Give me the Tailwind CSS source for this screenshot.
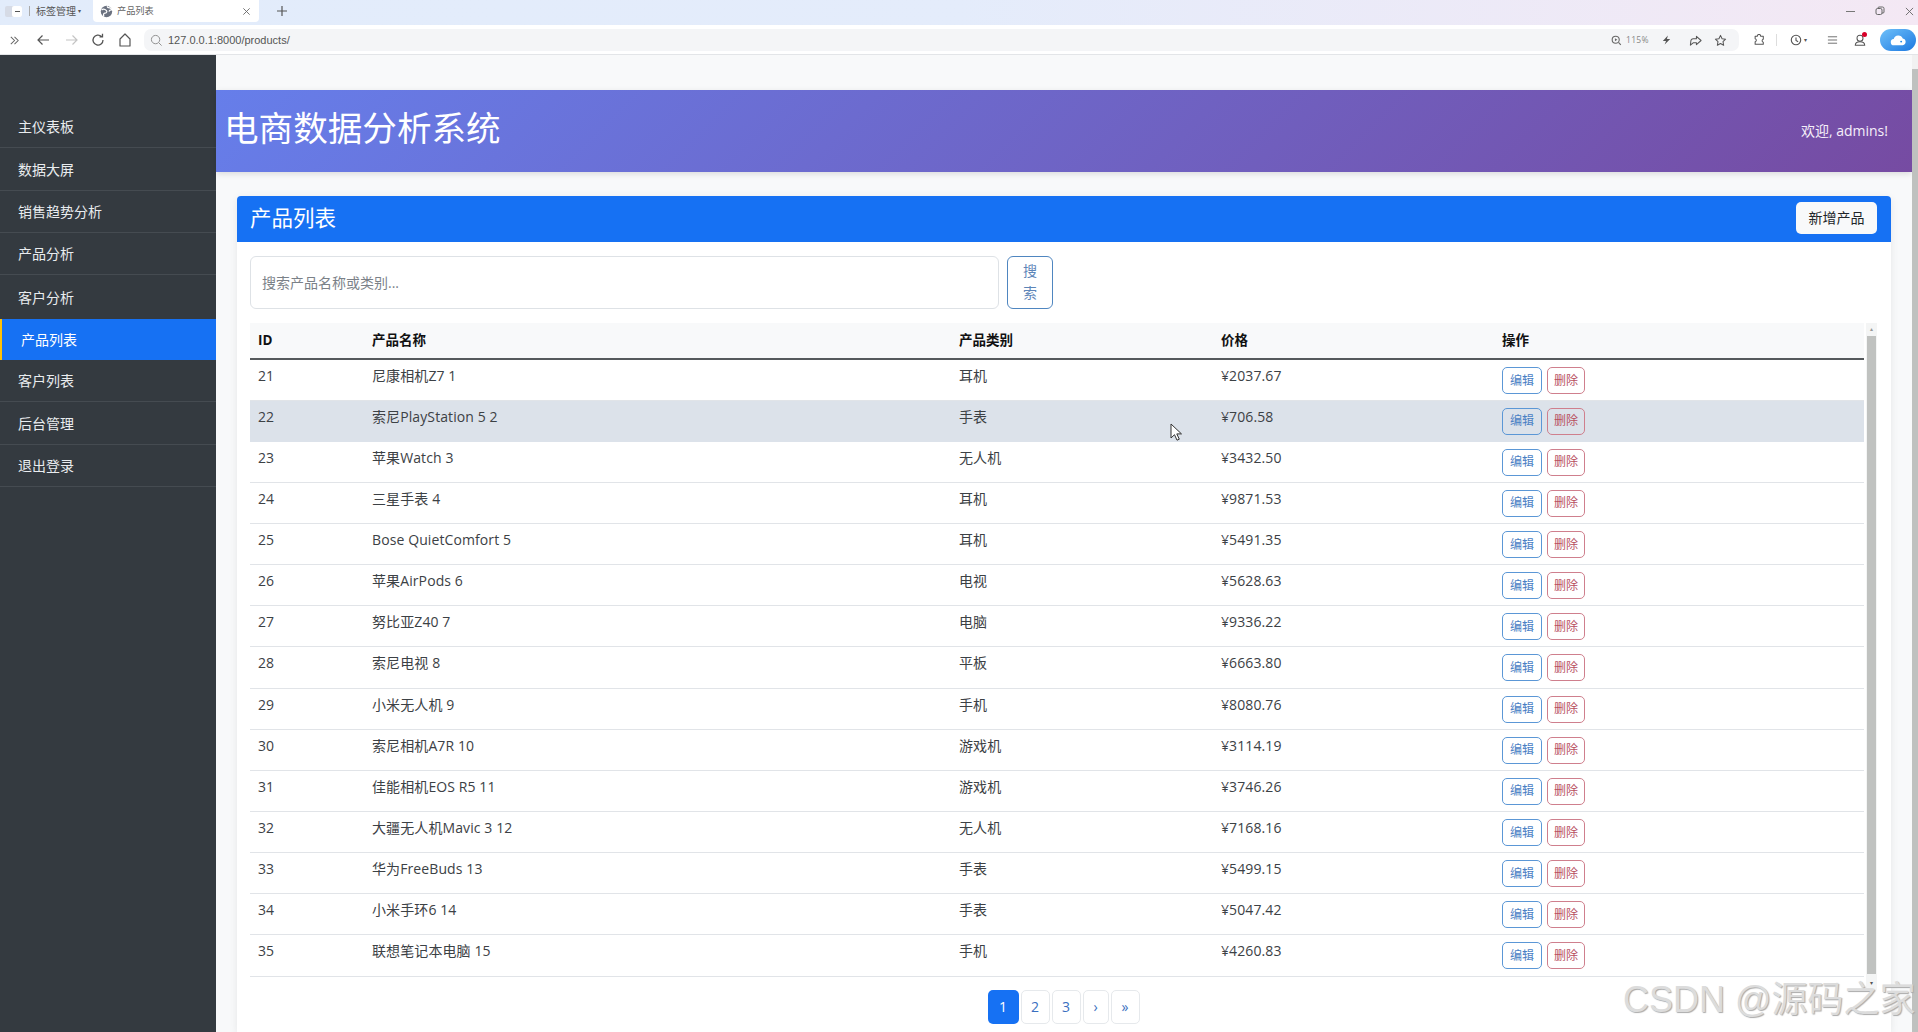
<!DOCTYPE html>
<html lang="zh-CN">
<head>
<meta charset="utf-8">
<title>产品列表</title>
<script src="https://cdn.jsdelivr.net/npm/@tailwindcss/browser@4"></script>
</head>
<body class="h-[1032px] w-[1918px] overflow-hidden bg-[#f8f9fa] font-['Open_Sans','Noto_Sans_CJK_SC',sans-serif] text-[#212529] relative">

<!-- browser chrome -->
<div class="h-[25px] flex items-start bg-gradient-to-r from-[#e2ecfb] via-[#e4ecfb] to-[#f4e8f4] text-[11px] text-[#555]">
  <div class="flex items-center w-[93px] h-[22px] pl-[5px]">
    <div class="w-[17px] h-[11px] rounded-[2px] bg-[#d6dbe6] flex justify-end shrink-0"><div class="w-[10px] h-full bg-white rounded-[2px] flex items-center justify-center"><div class="w-[5px] h-px bg-[#555]"></div></div></div>
    <div class="ml-[7px] w-px h-[10px] bg-[#aaa] shrink-0"></div>
    <span class="ml-[6px] text-[10px] whitespace-nowrap">标签管理</span><span class="text-[6px] ml-[2px]">▾</span>
  </div>
  <div class="w-[166px] h-[22px] bg-white rounded-b-[4px] flex items-center pl-[7px] pr-[8px] gap-[4px]">
    <svg width="13" height="13" viewBox="0 0 16 16"><circle cx="8" cy="8" r="7" fill="#6b7280"/><path d="M2 6c3-2 5 0 6 1s0 3-2 3-2 3-1 4M9 1.500c0 2 2 2 3 2s2 1 2.500 2.500c-2 0-3 .5-3.500 2" fill="none" stroke="#fff" stroke-width="1.500"/></svg>
    <span class="text-[9.200px] flex-1 text-[#666]">产品列表</span>
    <svg width="9" height="9" viewBox="0 0 10 10"><path d="M1.500 1.500l7 7M8.500 1.500l-7 7" stroke="#666" stroke-width="1"/></svg>
  </div>
  <svg class="ml-[17px] mt-[5px]" width="12" height="12" viewBox="0 0 12 12"><path d="M6 1v10M1 6h10" stroke="#555" stroke-width="1.200"/></svg>
  <div class="ml-auto flex items-center h-[22px] gap-[20px] pr-[4px]">
    <div class="w-[9px] h-px bg-[#777]"></div>
    <svg width="10" height="10" viewBox="0 0 10 10"><rect x="1" y="2.500" width="6" height="6" rx="1.500" fill="none" stroke="#666"/><path d="M3 2.500V2a1 1 0 0 1 1-1h3.500A1.500 1.500 0 0 1 9 2.500V6a1 1 0 0 1-1 1h-1" fill="none" stroke="#666"/></svg>
    <svg width="9" height="9" viewBox="0 0 10 10"><path d="M1 1l8 8M9 1l-8 8" stroke="#666" stroke-width="1"/></svg>
  </div>
</div>
<div class="h-[30px] pt-[1px] flex items-center bg-white border-b border-[#e3e5e8]">
  <div class="w-[144px] shrink-0 flex items-center pl-[9px] text-[#666]">
    <svg width="11" height="11" viewBox="0 0 12 12"><path d="M2 2l4 4-4 4M6 2l4 4-4 4" fill="none" stroke="#666" stroke-width="1.100"/></svg>
    <svg class="ml-[15px]" width="16" height="16" viewBox="0 0 16 16"><path d="M14 8H3M7.500 3.500L3 8l4.500 4.500" fill="none" stroke="#555" stroke-width="1.200"/></svg>
    <svg class="ml-[13px]" width="16" height="16" viewBox="0 0 16 16"><path d="M2 8h11M8.500 3.500L13 8l-4.500 4.500" fill="none" stroke="#c4c4c4" stroke-width="1.200"/></svg>
    <svg class="ml-[10px]" width="16" height="16" viewBox="0 0 16 16"><path d="M13 8a5 5 0 1 1-1.500-3.500M12.500 1.800v3h-3" fill="none" stroke="#555" stroke-width="1.300"/></svg>
    <svg class="ml-[11px]" width="16" height="16" viewBox="0 0 16 16"><path d="M3 14V7l5-5 5 5v7z" fill="none" stroke="#555" stroke-width="1.200" stroke-linejoin="round"/></svg>
  </div>
  <div class="w-[1595px] shrink-0 h-[22px] bg-[#f4f5f7] rounded-[7px] flex items-center pl-[6px] pr-[12px]">
    <svg width="13" height="13" viewBox="0 0 14 14"><circle cx="6" cy="6" r="4.500" fill="none" stroke="#8a8a8a"/><path d="M9.500 9.500L12.500 12.500" stroke="#8a8a8a"/></svg>
    <span class="ml-[5px] text-[11px] text-[#555] flex-1 font-['Liberation_Sans',sans-serif]">127.0.0.1:8000/products/</span>
    <svg width="11" height="11" viewBox="0 0 14 14"><circle cx="6" cy="6" r="4.500" fill="none" stroke="#666" stroke-width="1.400"/><path d="M9.500 9.500L12.500 12.500" stroke="#666" stroke-width="1.400"/><path d="M5 4v4l3-2z" fill="#666"/></svg>
    <span class="ml-[4px] w-[20px] text-[8.500px] text-[#888] tracking-[.3px]">115%</span>
    <svg class="ml-[15px]" width="11" height="12" viewBox="0 0 12 12"><path d="M7.500 1L2 7h3.500L4 11l6-6H6.500z" fill="#555"/></svg>
    <svg class="ml-[17px]" width="13" height="13" viewBox="0 0 14 14"><path d="M8 2.500l5 4.500-5 4.500V9.500H4.500L1.500 12 2 7.500A2.500 2.500 0 0 1 4.500 5H8z" fill="none" stroke="#555" stroke-width="1.100" stroke-linejoin="round"/></svg>
    <svg class="ml-[12px]" width="13" height="13" viewBox="0 0 14 14"><path d="M7 1.500l1.700 3.600 3.800.5-2.800 2.600.7 3.900L7 10.200l-3.400 1.900.7-3.900L1.500 5.600l3.800-.5z" fill="none" stroke="#555" stroke-width="1.100" stroke-linejoin="round"/></svg>
  </div>
  <div class="flex items-center pl-[14px] flex-1">
    <svg width="12" height="12" viewBox="0 0 14 14"><path d="M5 2.500a2 2 0 0 1 4 0H12v3.500a1.800 1.800 0 0 0 0 3.500V12H2.500V9a1.800 1.800 0 0 0 0-3.500V2.500z" fill="none" stroke="#555" stroke-width="1.200" stroke-linejoin="round"/></svg>
    <div class="ml-[11px] w-px h-[12px] bg-[#ddd]"></div>
    <svg class="ml-[13px]" width="12" height="12" viewBox="0 0 14 14"><circle cx="7" cy="7" r="5.500" fill="none" stroke="#555" stroke-width="1.300"/><path d="M7 4v3.500l2.500 1.500" fill="none" stroke="#555" stroke-width="1.300"/></svg>
    <span class="text-[6px] ml-[2px] w-[6px] text-[#555]">▾</span>
    <svg class="ml-[17px]" width="11" height="12" viewBox="0 0 12 12"><path d="M1 2.500h10M1 6h10M1 9.500h10" stroke="#666" stroke-width="1"/></svg>
    <div class="ml-[16px] relative w-[11px] h-[14px]">
      <svg width="12" height="14" viewBox="0 0 14 14"><circle cx="7" cy="5" r="3.500" fill="none" stroke="#555" stroke-width="1.200"/><path d="M1.500 13c0-3 2-4 5.500-4s5.500 1 5.500 4z" fill="none" stroke="#555" stroke-width="1.200"/></svg>
      <div class="absolute -top-[1px] -right-[2px] w-[5px] h-[5px] rounded-full bg-[#d8002a]"></div>
    </div>
    <div class="ml-[15px] w-[36px] h-[22px] rounded-full bg-gradient-to-br from-[#6ec0f9] to-[#1878e0] flex items-center justify-center shrink-0">
      <svg width="17" height="12" viewBox="0 0 16 11"><path d="M4 10.500a3 3 0 0 1-.5-6A4.500 4.500 0 0 1 12 4a3.300 3.300 0 0 1 0 6.500z" fill="#fff"/><circle cx="10.500" cy="7" r=".9" fill="#1e88e5"/></svg>
    </div>
  </div>
</div>

<!-- page -->
<div class="flex h-[977px] relative">
  <aside class="w-[216px] shrink-0 bg-[#343a40] pt-[51px] text-[14px] text-[#e9ecef]">
    <nav class="flex flex-col">
      <a class="h-[42px] flex items-center pl-[18px] border-b border-[#454b51]">主仪表板</a>
      <a class="h-[43px] flex items-center pl-[18px] border-b border-[#454b51]">数据大屏</a>
      <a class="h-[42px] flex items-center pl-[18px] border-b border-[#454b51]">销售趋势分析</a>
      <a class="h-[42px] flex items-center pl-[18px] border-b border-[#454b51]">产品分析</a>
      <a class="h-[44px] flex items-center pl-[18px]">客户分析</a>
      <a class="h-[41px] flex items-center pl-[19px] bg-[#1671f3] text-white border-l-[2px] border-[#ffc107]">产品列表</a>
      <a class="h-[42px] flex items-center pl-[18px] border-b border-[#454b51]">客户列表</a>
      <a class="h-[43px] flex items-center pl-[18px] border-b border-[#454b51]">后台管理</a>
      <a class="h-[42px] flex items-center pl-[18px] border-b border-[#454b51]">退出登录</a>
    </nav>
  </aside>
  <main class="w-[1696px] shrink-0 pt-[35px]">
    <header class="h-[82px] bg-[linear-gradient(135deg,#667eea_0%,#764ba2_100%)] flex items-center justify-between pl-[8px] pr-[24px] shadow-[0_2px_6px_rgba(0,0,0,.12)]">
      <h1 class="text-[34.600px] leading-none text-white font-normal -mt-[5px]">电商数据分析系统</h1>
      <span class="text-[14px] -mt-[2px] text-[#f5f0fa]">欢迎, admins!</span>
    </header>
    <section class="mt-[24px] ml-[21px] w-[1654px] h-[836px] bg-white rounded-t-[4px] shadow-[0_2px_8px_rgba(0,0,0,.08)]">
      <div class="h-[46px] bg-[#1671f3] rounded-t-[4px] flex items-start justify-between pl-[13px] pr-[14px]">
        <h2 class="text-[21.500px] text-white leading-none mt-[11px]">产品列表</h2>
        <button class="w-[81px] h-[32px] mt-[6px] pb-[2px] bg-[#f8f9fa] rounded-[5px] text-[14px] text-[#212529]">新增产品</button>
      </div>
      <div class="px-[13px] pt-[14px]">
        <div class="flex gap-[8px] h-[53px]">
          <input class="w-[749px] h-full border border-[#dee2e6] rounded-[6px] px-[11px] pb-[1px] text-[14px] bg-white placeholder:text-[#7b8188]" placeholder="搜索产品名称或类别...">
          <button class="w-[46px] h-full border border-[#4f86c0] rounded-[6px] text-[#5d85b8] text-[14px] leading-[22px] px-[14px] pb-[1px]">搜索</button>
        </div>
        <div class="relative mt-[14px] w-[1627px]">
          <div class="absolute left-[1616px] top-0 w-[11px] h-[667px] bg-[#f4f5f5] flex flex-col items-center">
            <div class="text-[6px] h-[13px] text-[#999] leading-[13px]">▴</div>
            <div class="w-[9px] h-[638px] bg-[#c0c2c0]"></div>
            <div class="text-[6px] mt-[4px] text-[#555] leading-[10px]">▾</div>
          </div>
          <table class="table-fixed border-collapse w-[1614px] text-[14px]">
            <colgroup><col class="w-[114px]"><col class="w-[587px]"><col class="w-[262px]"><col class="w-[281px]"><col class="w-[370px]"></colgroup>
            <thead class="bg-[#f8f9fa]">
              <tr class="h-[36px] border-b-2 border-[#55595c] text-left text-[13.500px] text-[#111]">
                <th class="pl-[8px] font-bold">ID</th><th class="pl-[8px] font-bold">产品名称</th><th class="pl-[8px] font-bold">产品类别</th><th class="pl-[8px] font-bold">价格</th><th class="pl-[8px] font-bold">操作</th>
              </tr>
            </thead>
            <tbody class="text-[#3c4145] tracking-[.1px]">
              <tr class="h-[41.150px] border-b border-[#e1e4e8]"><td class="pl-[8px] align-top pt-[5px]">21</td><td class="pl-[8px] align-top pt-[5px]">尼康相机Z7 1</td><td class="pl-[8px] align-top pt-[5px]">耳机</td><td class="pl-[8px] align-top pt-[5px]">¥2037.67</td><td class="pl-[8px] align-top pt-[7px]"><div class="flex gap-[5px]"><button class="w-[40px] h-[27px] border border-[#5b97d6] rounded-[5px] text-[12px] text-[#4a80c4]">编辑</button><button class="w-[38px] h-[27px] border border-[#cf7f8d] rounded-[5px] text-[12px] text-[#b8505f]">删除</button></div></td></tr>
              <tr class="h-[41.150px] bg-[#dce2ea] border-b border-[#dce2ea]"><td class="pl-[8px] align-top pt-[5px]">22</td><td class="pl-[8px] align-top pt-[5px]">索尼PlayStation 5 2</td><td class="pl-[8px] align-top pt-[5px]">手表</td><td class="pl-[8px] align-top pt-[5px]">¥706.58</td><td class="pl-[8px] align-top pt-[7px]"><div class="flex gap-[5px]"><button class="w-[40px] h-[27px] border border-[#5b97d6] rounded-[5px] text-[12px] text-[#4a80c4]">编辑</button><button class="w-[38px] h-[27px] border border-[#cf7f8d] rounded-[5px] text-[12px] text-[#b8505f]">删除</button></div></td></tr>
              <tr class="h-[41.150px] border-b border-[#e1e4e8]"><td class="pl-[8px] align-top pt-[5px]">23</td><td class="pl-[8px] align-top pt-[5px]">苹果Watch 3</td><td class="pl-[8px] align-top pt-[5px]">无人机</td><td class="pl-[8px] align-top pt-[5px]">¥3432.50</td><td class="pl-[8px] align-top pt-[7px]"><div class="flex gap-[5px]"><button class="w-[40px] h-[27px] border border-[#5b97d6] rounded-[5px] text-[12px] text-[#4a80c4]">编辑</button><button class="w-[38px] h-[27px] border border-[#cf7f8d] rounded-[5px] text-[12px] text-[#b8505f]">删除</button></div></td></tr>
              <tr class="h-[41.150px] border-b border-[#e1e4e8]"><td class="pl-[8px] align-top pt-[5px]">24</td><td class="pl-[8px] align-top pt-[5px]">三星手表 4</td><td class="pl-[8px] align-top pt-[5px]">耳机</td><td class="pl-[8px] align-top pt-[5px]">¥9871.53</td><td class="pl-[8px] align-top pt-[7px]"><div class="flex gap-[5px]"><button class="w-[40px] h-[27px] border border-[#5b97d6] rounded-[5px] text-[12px] text-[#4a80c4]">编辑</button><button class="w-[38px] h-[27px] border border-[#cf7f8d] rounded-[5px] text-[12px] text-[#b8505f]">删除</button></div></td></tr>
              <tr class="h-[41.150px] border-b border-[#e1e4e8]"><td class="pl-[8px] align-top pt-[5px]">25</td><td class="pl-[8px] align-top pt-[5px]">Bose QuietComfort 5</td><td class="pl-[8px] align-top pt-[5px]">耳机</td><td class="pl-[8px] align-top pt-[5px]">¥5491.35</td><td class="pl-[8px] align-top pt-[7px]"><div class="flex gap-[5px]"><button class="w-[40px] h-[27px] border border-[#5b97d6] rounded-[5px] text-[12px] text-[#4a80c4]">编辑</button><button class="w-[38px] h-[27px] border border-[#cf7f8d] rounded-[5px] text-[12px] text-[#b8505f]">删除</button></div></td></tr>
              <tr class="h-[41.150px] border-b border-[#e1e4e8]"><td class="pl-[8px] align-top pt-[5px]">26</td><td class="pl-[8px] align-top pt-[5px]">苹果AirPods 6</td><td class="pl-[8px] align-top pt-[5px]">电视</td><td class="pl-[8px] align-top pt-[5px]">¥5628.63</td><td class="pl-[8px] align-top pt-[7px]"><div class="flex gap-[5px]"><button class="w-[40px] h-[27px] border border-[#5b97d6] rounded-[5px] text-[12px] text-[#4a80c4]">编辑</button><button class="w-[38px] h-[27px] border border-[#cf7f8d] rounded-[5px] text-[12px] text-[#b8505f]">删除</button></div></td></tr>
              <tr class="h-[41.150px] border-b border-[#e1e4e8]"><td class="pl-[8px] align-top pt-[5px]">27</td><td class="pl-[8px] align-top pt-[5px]">努比亚Z40 7</td><td class="pl-[8px] align-top pt-[5px]">电脑</td><td class="pl-[8px] align-top pt-[5px]">¥9336.22</td><td class="pl-[8px] align-top pt-[7px]"><div class="flex gap-[5px]"><button class="w-[40px] h-[27px] border border-[#5b97d6] rounded-[5px] text-[12px] text-[#4a80c4]">编辑</button><button class="w-[38px] h-[27px] border border-[#cf7f8d] rounded-[5px] text-[12px] text-[#b8505f]">删除</button></div></td></tr>
              <tr class="h-[41.150px] border-b border-[#e1e4e8]"><td class="pl-[8px] align-top pt-[5px]">28</td><td class="pl-[8px] align-top pt-[5px]">索尼电视 8</td><td class="pl-[8px] align-top pt-[5px]">平板</td><td class="pl-[8px] align-top pt-[5px]">¥6663.80</td><td class="pl-[8px] align-top pt-[7px]"><div class="flex gap-[5px]"><button class="w-[40px] h-[27px] border border-[#5b97d6] rounded-[5px] text-[12px] text-[#4a80c4]">编辑</button><button class="w-[38px] h-[27px] border border-[#cf7f8d] rounded-[5px] text-[12px] text-[#b8505f]">删除</button></div></td></tr>
              <tr class="h-[41.150px] border-b border-[#e1e4e8]"><td class="pl-[8px] align-top pt-[5px]">29</td><td class="pl-[8px] align-top pt-[5px]">小米无人机 9</td><td class="pl-[8px] align-top pt-[5px]">手机</td><td class="pl-[8px] align-top pt-[5px]">¥8080.76</td><td class="pl-[8px] align-top pt-[7px]"><div class="flex gap-[5px]"><button class="w-[40px] h-[27px] border border-[#5b97d6] rounded-[5px] text-[12px] text-[#4a80c4]">编辑</button><button class="w-[38px] h-[27px] border border-[#cf7f8d] rounded-[5px] text-[12px] text-[#b8505f]">删除</button></div></td></tr>
              <tr class="h-[41.150px] border-b border-[#e1e4e8]"><td class="pl-[8px] align-top pt-[5px]">30</td><td class="pl-[8px] align-top pt-[5px]">索尼相机A7R 10</td><td class="pl-[8px] align-top pt-[5px]">游戏机</td><td class="pl-[8px] align-top pt-[5px]">¥3114.19</td><td class="pl-[8px] align-top pt-[7px]"><div class="flex gap-[5px]"><button class="w-[40px] h-[27px] border border-[#5b97d6] rounded-[5px] text-[12px] text-[#4a80c4]">编辑</button><button class="w-[38px] h-[27px] border border-[#cf7f8d] rounded-[5px] text-[12px] text-[#b8505f]">删除</button></div></td></tr>
              <tr class="h-[41.150px] border-b border-[#e1e4e8]"><td class="pl-[8px] align-top pt-[5px]">31</td><td class="pl-[8px] align-top pt-[5px]">佳能相机EOS R5 11</td><td class="pl-[8px] align-top pt-[5px]">游戏机</td><td class="pl-[8px] align-top pt-[5px]">¥3746.26</td><td class="pl-[8px] align-top pt-[7px]"><div class="flex gap-[5px]"><button class="w-[40px] h-[27px] border border-[#5b97d6] rounded-[5px] text-[12px] text-[#4a80c4]">编辑</button><button class="w-[38px] h-[27px] border border-[#cf7f8d] rounded-[5px] text-[12px] text-[#b8505f]">删除</button></div></td></tr>
              <tr class="h-[41.150px] border-b border-[#e1e4e8]"><td class="pl-[8px] align-top pt-[5px]">32</td><td class="pl-[8px] align-top pt-[5px]">大疆无人机Mavic 3 12</td><td class="pl-[8px] align-top pt-[5px]">无人机</td><td class="pl-[8px] align-top pt-[5px]">¥7168.16</td><td class="pl-[8px] align-top pt-[7px]"><div class="flex gap-[5px]"><button class="w-[40px] h-[27px] border border-[#5b97d6] rounded-[5px] text-[12px] text-[#4a80c4]">编辑</button><button class="w-[38px] h-[27px] border border-[#cf7f8d] rounded-[5px] text-[12px] text-[#b8505f]">删除</button></div></td></tr>
              <tr class="h-[41.150px] border-b border-[#e1e4e8]"><td class="pl-[8px] align-top pt-[5px]">33</td><td class="pl-[8px] align-top pt-[5px]">华为FreeBuds 13</td><td class="pl-[8px] align-top pt-[5px]">手表</td><td class="pl-[8px] align-top pt-[5px]">¥5499.15</td><td class="pl-[8px] align-top pt-[7px]"><div class="flex gap-[5px]"><button class="w-[40px] h-[27px] border border-[#5b97d6] rounded-[5px] text-[12px] text-[#4a80c4]">编辑</button><button class="w-[38px] h-[27px] border border-[#cf7f8d] rounded-[5px] text-[12px] text-[#b8505f]">删除</button></div></td></tr>
              <tr class="h-[41.150px] border-b border-[#e1e4e8]"><td class="pl-[8px] align-top pt-[5px]">34</td><td class="pl-[8px] align-top pt-[5px]">小米手环6 14</td><td class="pl-[8px] align-top pt-[5px]">手表</td><td class="pl-[8px] align-top pt-[5px]">¥5047.42</td><td class="pl-[8px] align-top pt-[7px]"><div class="flex gap-[5px]"><button class="w-[40px] h-[27px] border border-[#5b97d6] rounded-[5px] text-[12px] text-[#4a80c4]">编辑</button><button class="w-[38px] h-[27px] border border-[#cf7f8d] rounded-[5px] text-[12px] text-[#b8505f]">删除</button></div></td></tr>
              <tr class="h-[41.150px] border-b border-[#e1e4e8]"><td class="pl-[8px] align-top pt-[5px]">35</td><td class="pl-[8px] align-top pt-[5px]">联想笔记本电脑 15</td><td class="pl-[8px] align-top pt-[5px]">手机</td><td class="pl-[8px] align-top pt-[5px]">¥4260.83</td><td class="pl-[8px] align-top pt-[7px]"><div class="flex gap-[5px]"><button class="w-[40px] h-[27px] border border-[#5b97d6] rounded-[5px] text-[12px] text-[#4a80c4]">编辑</button><button class="w-[38px] h-[27px] border border-[#cf7f8d] rounded-[5px] text-[12px] text-[#b8505f]">删除</button></div></td></tr>
            </tbody>
          </table>
          <div class="mt-[13px] flex gap-[2px] justify-center w-full text-[14px] text-[#3a6fc0]">
            <a class="w-[31px] h-[34px] flex items-center justify-center rounded-[5px] bg-[#1671f3] text-white">1</a>
            <a class="w-[29px] h-[34px] flex items-center justify-center rounded-[5px] border border-[#e6e9ec] bg-white">2</a>
            <a class="w-[29px] h-[34px] flex items-center justify-center rounded-[5px] border border-[#e6e9ec] bg-white">3</a>
            <a class="w-[26px] h-[34px] flex items-center justify-center rounded-[5px] border border-[#e6e9ec] bg-white">›</a>
            <a class="w-[29px] h-[34px] flex items-center justify-center rounded-[5px] border border-[#e6e9ec] bg-white">»</a>
          </div>
        </div>
      </div>
    </section>
  </main>
  <div class="w-[6px] shrink-0 bg-[#f1f1f1] flex flex-col"><div class="h-[14px]"></div><div class="flex-1 bg-[#bfc1bf]"></div></div>
</div>

<!-- cursor -->
<svg class="absolute left-[1170px] top-[423px]" width="13" height="18" viewBox="0 0 13 18"><path d="M1 1v14l3.500-3.300 2.500 5.500 2.300-1-2.500-5.300H11.500z" fill="#fff" stroke="#333" stroke-width="1"/></svg>
<!-- watermark -->
<div class="absolute left-[1623px] top-[975px] text-[36px] leading-[50px] whitespace-nowrap text-[#dcdcdc] font-['Liberation_Sans','Noto_Sans_CJK_SC',sans-serif] [text-shadow:1px_1px_1px_#aaa]">CSDN @源码之家</div>
</body>
</html>
